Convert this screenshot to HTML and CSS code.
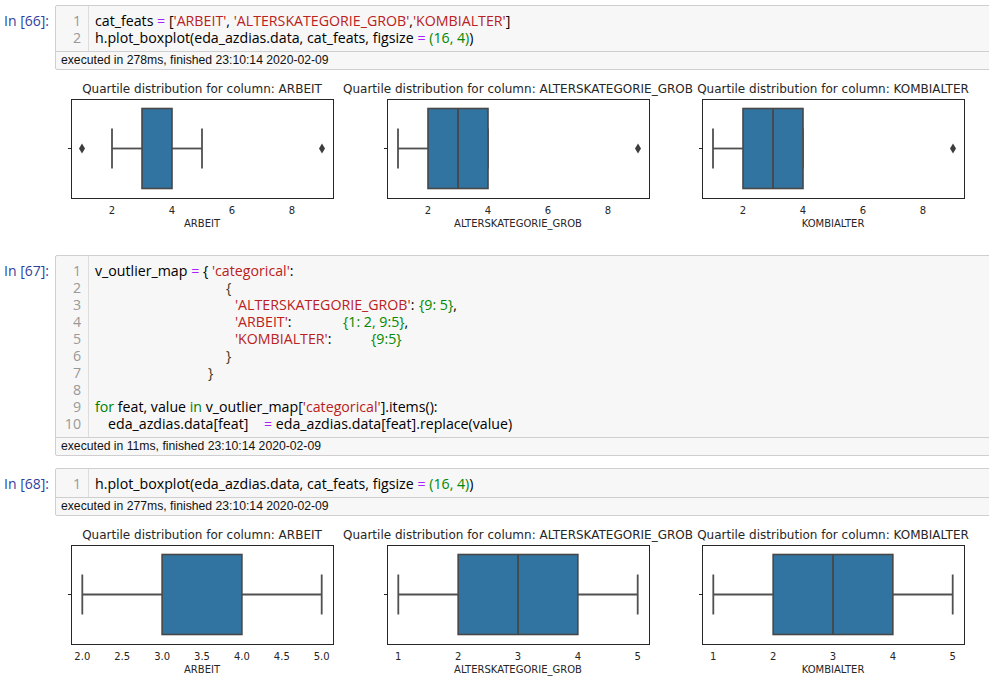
FILE: index.html
```html
<!DOCTYPE html>
<html>
<head>
<meta charset="utf-8">
<link rel="stylesheet" href="styles.css">
</head>
<body>
<div class="nb">

  <div class="cell">
    <div class="prompt">In&nbsp;[66]:</div>
    <div class="inbox">
      <div class="code">
        <div class="gutter"><div>1</div><div>2</div></div>
        <div class="lines">
          <div class="ln">cat_feats <span class="op">=</span> [<span class="s">'ARBEIT'</span>, <span class="s">'ALTERSKATEGORIE_GROB'</span>,<span class="s">'KOMBIALTER'</span>]</div>
          <div class="ln">h.plot_boxplot(eda_azdias.data, cat_feats, figsize <span class="op">=</span> <span class="n">(16, 4)</span>)</div>
        </div>
      </div>
      <div class="exec">executed in 278ms, finished 23:10:14 2020-02-09</div>
    </div>
  </div>
  <div class="output">
    <svg class="fig" width="934" height="173" viewBox="0 0 934 173">
      <!-- plot 1 -->
      <text class="title" x="147" y="23">Quartile distribution for column: ARBEIT</text>
      <rect class="spine" x="16.5" y="29.5" width="262" height="99"/>
      <line class="tick" x1="13" y1="78.5" x2="16" y2="78.5"/>
      <text class="tl" x="57" y="144">2</text>
      <text class="tl" x="117" y="144">4</text>
      <text class="tl" x="177" y="144">6</text>
      <text class="tl" x="237" y="144">8</text>
      <text class="tl" x="147" y="157">ARBEIT</text>
      <rect class="box" x="87" y="38.5" width="30" height="80"/>
      <line class="wh" x1="57" y1="78.5" x2="87" y2="78.5"/>
      <line class="wh" x1="117" y1="78.5" x2="147" y2="78.5"/>
      <line class="wh" x1="57" y1="58.5" x2="57" y2="98.5"/>
      <line class="wh" x1="147" y1="58.5" x2="147" y2="98.5"/>
      <polygon class="flier" points="27,73.5 30,78.5 27,83.5 24,78.5"/>
      <polygon class="flier" points="267,73.5 270,78.5 267,83.5 264,78.5"/>

      <!-- plot 2 -->
      <text class="title" x="463" y="23">Quartile distribution for column: ALTERSKATEGORIE_GROB</text>
      <rect class="spine" x="332.5" y="29.5" width="262" height="99"/>
      <line class="tick" x1="329" y1="78.5" x2="332" y2="78.5"/>
      <text class="tl" x="373" y="144">2</text>
      <text class="tl" x="433" y="144">4</text>
      <text class="tl" x="493" y="144">6</text>
      <text class="tl" x="553" y="144">8</text>
      <text class="tl" x="463" y="157">ALTERSKATEGORIE_GROB</text>
      <rect class="box" x="373" y="38.5" width="60" height="80"/>
      <line class="wh" x1="343" y1="78.5" x2="373" y2="78.5"/>
      <line class="wh" x1="343" y1="58.5" x2="343" y2="98.5"/>
      <line class="wh" x1="433" y1="58.5" x2="433" y2="98.5"/>
      <line class="med" x1="403" y1="38.5" x2="403" y2="118.5"/>
      <polygon class="flier" points="583,73.5 586,78.5 583,83.5 580,78.5"/>

      <!-- plot 3 -->
      <text class="title" x="778" y="23">Quartile distribution for column: KOMBIALTER</text>
      <rect class="spine" x="647.5" y="29.5" width="262" height="99"/>
      <line class="tick" x1="644" y1="78.5" x2="647" y2="78.5"/>
      <text class="tl" x="688" y="144">2</text>
      <text class="tl" x="748" y="144">4</text>
      <text class="tl" x="808" y="144">6</text>
      <text class="tl" x="868" y="144">8</text>
      <text class="tl" x="778" y="157">KOMBIALTER</text>
      <rect class="box" x="688" y="38.5" width="60" height="80"/>
      <line class="wh" x1="658" y1="78.5" x2="688" y2="78.5"/>
      <line class="wh" x1="658" y1="58.5" x2="658" y2="98.5"/>
      <line class="wh" x1="748" y1="58.5" x2="748" y2="98.5"/>
      <line class="med" x1="718" y1="38.5" x2="718" y2="118.5"/>
      <polygon class="flier" points="898,73.5 901,78.5 898,83.5 895,78.5"/>
    </svg>
  </div>

  <div class="cell">
    <div class="prompt">In&nbsp;[67]:</div>
    <div class="inbox">
      <div class="code">
        <div class="gutter"><div>1</div><div>2</div><div>3</div><div>4</div><div>5</div><div>6</div><div>7</div><div>8</div><div>9</div><div>10</div></div>
        <div class="lines">
          <div class="ln">v_outlier_map <span class="op">=</span> { <span class="s">'categorical'</span>:</div>
          <div class="ln"><span class="i2 br">{</span></div>
          <div class="ln"><span class="i3 k3"><span class="s">'ALTERSKATEGORIE_GROB'</span>:</span><span class="n">{9: 5}</span>,</div>
          <div class="ln"><span class="i3 k4"><span class="s">'ARBEIT'</span>:</span><span class="n">{1: 2, 9:5}</span>,</div>
          <div class="ln"><span class="i3 k5"><span class="s">'KOMBIALTER'</span>:</span><span class="n">{9:5}</span></div>
          <div class="ln"><span class="i2 br">}</span></div>
          <div class="ln"><span class="i7 br">}</span></div>
          <div class="ln">&nbsp;</div>
          <div class="ln"><span class="kw">for</span> feat, value <span class="kw">in</span> v_outlier_map[<span class="s">'categorical'</span>].items():</div>
          <div class="ln"><span class="i10 lhs">eda_azdias.data[feat]</span><span class="op">=</span> eda_azdias.data[feat].replace(value)</div>
        </div>
      </div>
      <div class="exec">executed in 11ms, finished 23:10:14 2020-02-09</div>
    </div>
  </div>
  <div class="gap"></div>

  <div class="cell">
    <div class="prompt">In&nbsp;[68]:</div>
    <div class="inbox">
      <div class="code">
        <div class="gutter"><div>1</div></div>
        <div class="lines">
          <div class="ln">h.plot_boxplot(eda_azdias.data, cat_feats, figsize <span class="op">=</span> <span class="n">(16, 4)</span>)</div>
        </div>
      </div>
      <div class="exec">executed in 277ms, finished 23:10:14 2020-02-09</div>
    </div>
  </div>
  <div class="output">
    <svg class="fig" width="934" height="173" viewBox="0 0 934 173">
      <!-- plot 1 -->
      <text class="title" x="147" y="23">Quartile distribution for column: ARBEIT</text>
      <rect class="spine" x="16.5" y="29.5" width="262" height="99"/>
      <line class="tick" x1="13" y1="78.5" x2="16" y2="78.5"/>
      <text class="tl" x="27.3" y="144">2.0</text>
      <text class="tl" x="67.2" y="144">2.5</text>
      <text class="tl" x="107.1" y="144">3.0</text>
      <text class="tl" x="147" y="144">3.5</text>
      <text class="tl" x="186.9" y="144">4.0</text>
      <text class="tl" x="226.8" y="144">4.5</text>
      <text class="tl" x="266.7" y="144">5.0</text>
      <text class="tl" x="147" y="157">ARBEIT</text>
      <rect class="box" x="107.1" y="38.5" width="79.8" height="80"/>
      <line class="wh" x1="27.3" y1="78.5" x2="107.1" y2="78.5"/>
      <line class="wh" x1="186.9" y1="78.5" x2="266.7" y2="78.5"/>
      <line class="wh" x1="27.3" y1="58.5" x2="27.3" y2="98.5"/>
      <line class="wh" x1="266.7" y1="58.5" x2="266.7" y2="98.5"/>

      <!-- plot 2 -->
      <text class="title" x="463" y="23">Quartile distribution for column: ALTERSKATEGORIE_GROB</text>
      <rect class="spine" x="332.5" y="29.5" width="262" height="99"/>
      <line class="tick" x1="329" y1="78.5" x2="332" y2="78.5"/>
      <text class="tl" x="343.3" y="144">1</text>
      <text class="tl" x="403.15" y="144">2</text>
      <text class="tl" x="463" y="144">3</text>
      <text class="tl" x="522.85" y="144">4</text>
      <text class="tl" x="582.7" y="144">5</text>
      <text class="tl" x="463" y="157">ALTERSKATEGORIE_GROB</text>
      <rect class="box" x="403.15" y="38.5" width="119.7" height="80"/>
      <line class="wh" x1="343.3" y1="78.5" x2="403.15" y2="78.5"/>
      <line class="wh" x1="522.85" y1="78.5" x2="582.7" y2="78.5"/>
      <line class="wh" x1="343.3" y1="58.5" x2="343.3" y2="98.5"/>
      <line class="wh" x1="582.7" y1="58.5" x2="582.7" y2="98.5"/>
      <line class="med" x1="463" y1="38.5" x2="463" y2="118.5"/>

      <!-- plot 3 -->
      <text class="title" x="778" y="23">Quartile distribution for column: KOMBIALTER</text>
      <rect class="spine" x="647.5" y="29.5" width="262" height="99"/>
      <line class="tick" x1="644" y1="78.5" x2="647" y2="78.5"/>
      <text class="tl" x="658.3" y="144">1</text>
      <text class="tl" x="718.15" y="144">2</text>
      <text class="tl" x="778" y="144">3</text>
      <text class="tl" x="837.85" y="144">4</text>
      <text class="tl" x="897.7" y="144">5</text>
      <text class="tl" x="778" y="157">KOMBIALTER</text>
      <rect class="box" x="718.15" y="38.5" width="119.7" height="80"/>
      <line class="wh" x1="658.3" y1="78.5" x2="718.15" y2="78.5"/>
      <line class="wh" x1="837.85" y1="78.5" x2="897.7" y2="78.5"/>
      <line class="wh" x1="658.3" y1="58.5" x2="658.3" y2="98.5"/>
      <line class="wh" x1="897.7" y1="58.5" x2="897.7" y2="98.5"/>
      <line class="med" x1="778" y1="38.5" x2="778" y2="118.5"/>
    </svg>
  </div>

</div>
</body>
</html>
```

FILE: styles.css
```css
html, body {
  margin: 0;
  padding: 0;
  background: #ffffff;
  overflow: hidden;
}

body {
  font-family: "Open Sans", "Noto Sans", sans-serif;
  color: #000;
}

.nb {
  padding-top: 5px;
}

.cell {
  display: flex;
  align-items: flex-start;
}

.prompt {
  flex: none;
  width: 55px;
  box-sizing: border-box;
  padding: 7px 0 0 4px;
  font-size: 14px;
  line-height: 17px;
  color: #303f9f;
  white-space: nowrap;
}

.inbox {
  flex: 1;
  margin-right: -8px;
  border: 1px solid #cfcfcf;
  border-radius: 2px;
  background: #f7f7f7;
}

.code {
  display: flex;
  font-size: 14.2px;
  line-height: 17px;
}

.gutter {
  flex: none;
  width: 33px;
  box-sizing: border-box;
  padding: 6px 7px 5px 0;
  border-right: 1px solid #dddddd;
  text-align: right;
  color: #999999;
}

.lines {
  flex: 1;
  padding: 6px 0 5px 6px;
}

.ln {
  height: 17px;
  white-space: pre;
}

.s { color: #ba2121; }
.op { color: #aa22ff; }
.n { color: #008800; }
.kw { color: #008000; }
.br { color: #3a3a22; }

.i2 { display: inline-block; margin-left: 131px; }
.i3 { display: inline-block; margin-left: 140px; }
.i7 { display: inline-block; margin-left: 113px; }
.i10 { display: inline-block; margin-left: 13px; }
.k3 { width: 184px; }
.k4 { width: 108px; }
.k5 { width: 136px; }
.lhs { width: 156px; }

.exec {
  border-top: 1px solid #cfcfcf;
  height: 17px;
  line-height: 17px;
  padding-left: 5px;
  font-family: "Liberation Sans", Arial, sans-serif;
  font-size: 12.2px;
  color: #111;
  white-space: nowrap;
}

.output {
  height: 173px;
  padding-left: 55px;
  margin-bottom: 12px;
}

.gap {
  height: 12px;
}

.fig {
  display: block;
}

.fig .title {
  font-family: "DejaVu Sans", sans-serif;
  font-size: 12px;
  fill: #262626;
  text-anchor: middle;
}

.fig .tl {
  font-family: "DejaVu Sans", sans-serif;
  font-size: 10px;
  fill: #262626;
  text-anchor: middle;
}

.fig .spine {
  fill: none;
  stroke: #262626;
  stroke-width: 1;
}

.fig .tick {
  stroke: #262626;
  stroke-width: 1;
}

.fig .box {
  fill: #3274a1;
  stroke: #474747;
  stroke-width: 1.6;
}

.fig .wh {
  stroke: #505050;
  stroke-width: 1.8;
}

.fig .med {
  stroke: #474747;
  stroke-width: 1.8;
}

.fig .flier {
  fill: #3d3d3d;
}
```
